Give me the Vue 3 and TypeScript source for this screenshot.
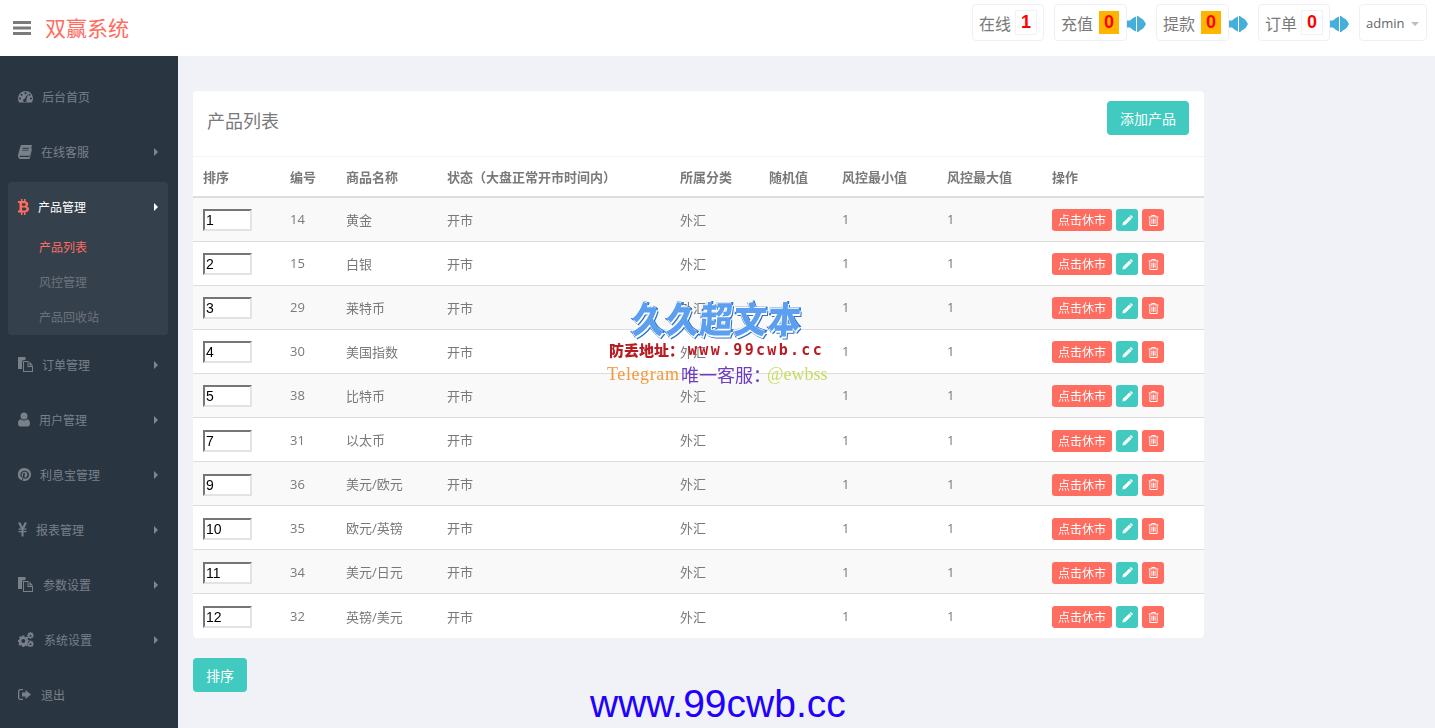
<script setup lang="ts">
interface NavItem { label: string; icon: string; w: number; gap: number; arrow: boolean }
const before: NavItem[] = [
  { label: '后台首页', icon: 'gauge', w: 15, gap: 9, arrow: false },
  { label: '在线客服', icon: 'book', w: 14, gap: 9, arrow: true },
]
const after: NavItem[] = [
  { label: '订单管理', icon: 'files', w: 15, gap: 9, arrow: true },
  { label: '用户管理', icon: 'user', w: 12, gap: 9, arrow: true },
  { label: '利息宝管理', icon: 'pin', w: 13, gap: 9, arrow: true },
  { label: '报表管理', icon: 'yen', w: 9, gap: 9, arrow: true },
  { label: '参数设置', icon: 'files', w: 15, gap: 10, arrow: true },
  { label: '系统设置', icon: 'cogs', w: 16, gap: 10, arrow: true },
  { label: '退出', icon: 'exit', w: 13, gap: 10, arrow: false },
]
const subs = ['产品列表', '风控管理', '产品回收站']
const rows = [
  [1, 14, '黄金'], [2, 15, '白银'], [3, 29, '莱特币'], [4, 30, '美国指数'], [5, 38, '比特币'],
  [7, 31, '以太币'], [9, 36, '美元/欧元'], [10, 35, '欧元/英镑'], [11, 34, '美元/日元'], [12, 32, '英镑/美元'],
] as const
const heads = ['排序', '编号', '商品名称', '状态（大盘正常开市时间内）', '所属分类', '随机值', '风控最小值', '风控最大值', '操作']
const colWidths = [87, 56, 101, 233, 89, 73, 105, 105, 162]
const counters = [
  { label: '充值', value: 0, warn: true },
  { label: '提款', value: 0, warn: true },
  { label: '订单', value: 0, warn: false },
]
</script>

<template>
  <div class="page">
    <header class="top">
      <svg class="bars" viewBox="0 0 18 14"><path d="M0 0h18v3H0zM0 5.500h18v3H0zM0 11h18v3H0z" /></svg>
      <span class="logo">双赢系统</span>
      <div class="top-right">
        <div class="chip online"><span>在线</span><b class="num">1</b></div>
        <template v-for="c in counters" :key="c.label">
          <div class="chip"><span>{{ c.label }}</span><b class="num" :class="{ warn: c.warn }">{{ c.value }}</b></div>
          <svg class="horn" viewBox="0 0 19 18">
            <path d="M0 5.500h3L6 3l3-1.500v15L6 15l-3-2.500H0z" />
            <path d="M10 1c1.200 0 2 .5 2.800 1.500l1.700 1c1.800 1 3 2.600 3.700 4.300l.8 1.200-.8 1.200c-.7 1.700-1.900 3.300-3.700 4.300l-1.700 1C12 16.500 11.200 17 10 17z" />
          </svg>
        </template>
        <div class="user">admin<i class="caret"></i></div>
      </div>
    </header>

    <div class="body">
      <aside class="side">
        <a v-for="n in before" :key="n.label" class="item">
          <svg class="ico" :style="{ width: n.w + 'px', marginRight: n.gap + 'px' }"><use :href="'#i-' + n.icon" width="100%" height="100%" /></svg>
          <span>{{ n.label }}</span><i v-if="n.arrow" class="arrow"></i>
        </a>
        <div class="group">
          <a class="item head">
            <svg class="ico btc" viewBox="0 0 11 16">
              <path fill-rule="evenodd" d="M3 0h1.500v2H6V0h1.500v2.200C9.300 2.600 10.300 3.600 10.300 5c0 1.100-.6 1.900-1.500 2.300 1.300.4 2.200 1.300 2.200 2.800 0 2-1.400 3-3.500 3.200V16H6v-2.600H4.500V16H3v-2.600H0v-1.800h1.500V3.900H0V2.100h3zM4 4.200v2.500h2c1 0 1.600-.4 1.600-1.250S7 4.200 6 4.200zM4 8.600v3h2.400c1.200 0 1.900-.5 1.900-1.500S7.600 8.600 6.400 8.600z" />
            </svg>
            <span>产品管理</span><i class="arrow"></i>
          </a>
          <a v-for="(s, i) in subs" :key="s" class="sub" :class="{ on: i === 0 }">{{ s }}</a>
        </div>
        <a v-for="n in after" :key="n.label" class="item">
          <svg class="ico" :style="{ width: n.w + 'px', marginRight: n.gap + 'px' }"><use :href="'#i-' + n.icon" width="100%" height="100%" /></svg>
          <span>{{ n.label }}</span><i v-if="n.arrow" class="arrow"></i>
        </a>
      </aside>

      <main class="main">
        <section class="panel">
          <div class="panel-head">
            <h2>产品列表</h2>
            <button class="btn">添加产品</button>
          </div>
          <table class="grid">
            <colgroup><col v-for="(w, i) in colWidths" :key="i" :style="{ width: w + 'px' }" /></colgroup>
            <thead><tr><th v-for="h in heads" :key="h">{{ h }}</th></tr></thead>
            <tbody>
              <tr v-for="r in rows" :key="r[1]">
                <td><input class="order" :value="r[0]" /></td>
                <td>{{ r[1] }}</td>
                <td>{{ r[2] }}</td>
                <td>开市</td>
                <td>外汇</td>
                <td></td>
                <td>1</td>
                <td>1</td>
                <td>
                  <div class="ops">
                    <button class="mini red text">点击休市</button>
                    <button class="mini teal">
                      <svg viewBox="0 0 12 12"><path d="M8 1.500 10.500 4 3.500 11 0.500 11.500 1 8.500zM9 .5c.4-.4 1-.4 1.400 0l1.100 1.100c.4.400.4 1 0 1.400l-.5.500L8.500 1z" /></svg>
                    </button>
                    <button class="mini red">
                      <svg viewBox="0 0 12 12"><path fill-rule="evenodd" d="M4 0h4l.7 1.500H11.500v1h-1v8.500c0 .6-.4 1-1 1h-7c-.6 0-1-.4-1-1V2.500h-1v-1h2.800zM4.600 1 4.300 1.500h3.400L7.400 1zM2.500 2.500V11h7V2.500zM3.800 4h1v5.500h-1zM5.500 4h1v5.500h-1zM7.200 4h1v5.500h-1z" /></svg>
                    </button>
                  </div>
                </td>
              </tr>
            </tbody>
          </table>
        </section>
        <button class="btn sort">排序</button>
      </main>
    </div>

    <div class="mark">
      <div class="mark-title">久久超文本</div>
      <div class="mark-line"><b class="mark-cn">防丢地址：</b><span class="mark-url">www.99cwb.cc</span></div>
      <div class="mark-tg"><span class="tg">Telegram</span><span class="kf">唯一客服：</span><span class="at">@ewbss</span></div>
    </div>
    <div class="bottom-url">www.99cwb.cc</div>

    <svg class="defs" width="0" height="0">
      <defs>
        <symbol id="i-gauge" viewBox="0 0 16 14">
          <path fill-rule="evenodd" d="M8 1a8 8 0 0 1 8 8c0 1.700-.5 3.200-1.300 4.500H1.300A8 8 0 0 1 0 9a8 8 0 0 1 8-8zM8 2.300a1.100 1.100 0 1 0 0 2.200 1.100 1.100 0 0 0 0-2.200zM3.800 4a1.100 1.100 0 1 0 0 2.200 1.100 1.100 0 0 0 0-2.200zM12.200 4a1.100 1.100 0 1 0 0 2.200 1.100 1.100 0 0 0 0-2.200zM2.200 8a1.100 1.100 0 1 0 0 2.200 1.100 1.100 0 0 0 0-2.200zM13.800 8a1.100 1.100 0 1 0 0 2.200 1.100 1.100 0 0 0 0-2.200zM9.800 5 7.200 9.300a1.800 1.800 0 1 0 1.700 1L10.500 5.300z" />
        </symbol>
        <symbol id="i-book" viewBox="0 0 15 14">
          <path fill-rule="evenodd" d="M3.500 0H15l-2.500 10.500c-.2.700-.6 1-1.300 1H2.500c-.7 0-1 .3-1 .7s.3.7 1 .7h9.500l2.200-9 .8.600-2.300 9.500c-.2.600-.6 1-1.300 1H2C.7 14 0 13 0 11.500.1 10.500 2.500 1.500 3 .7zM5 3l-.2 1h6.700l.3-1zM4.500 5l-.2 1H11l.3-1z" />
        </symbol>
        <symbol id="i-files" viewBox="0 0 15 15">
          <path fill-rule="evenodd" d="M0 0h7.500v3H6a2 2 0 0 0-2 2v7H0zM5 4h5.500v5H15v6H5zM6 5v9h8v-4H9.500V5zM11.500 4.500 15 8.500h-3.500z" />
        </symbol>
        <symbol id="i-user" viewBox="0 0 12 14">
          <path d="M6 0a3.500 3.500 0 1 1 0 7 3.500 3.500 0 0 1 0-7zM2.800 6.800C3.700 7.600 4.800 8 6 8s2.300-.4 3.200-1.200C11 7 12 8.500 12 11c0 1.800-1 3-2.600 3H2.600C1 14 0 12.800 0 11c0-2.500 1-4 2.800-4.200z" />
        </symbol>
        <symbol id="i-pin" viewBox="0 0 13 13">
          <path fill-rule="evenodd" d="M6.500 0a6.500 6.500 0 1 1-1.900 12.700c.2-.4.500-1 .6-1.500l.4-1.400c.3.500 1 .9 1.800.9 2.200 0 3.700-1.900 3.700-4.200C10.900 4.200 9 2.700 6.800 2.700 4 2.700 2.300 4.600 2.300 6.700c0 1 .5 2.200 1.400 2.600.2.100.3 0 .3-.1l.2-.7c0-.1 0-.2-.1-.3-.3-.4-.5-.9-.5-1.400 0-1.600 1.200-3 3.100-3 1.700 0 2.700 1 2.700 2.400 0 1.800-.8 3.300-2 3.300-.7 0-1.200-.5-1-1.300.2-.8.6-1.700.6-2.300 0-.5-.3-1-.9-1-.7 0-1.200.8-1.200 1.700 0 .6.200 1 .2 1l-.9 3.600c-.1.400-.1.900-.1 1.400A6.500 6.500 0 0 1 6.500 0z" />
        </symbol>
        <symbol id="i-yen" viewBox="0 0 9 14">
          <path d="M0 0h2.500L4.500 4.500 6.500 0H9L6.200 6H8.500v1.300H5.500V8.500h3v1.300h-3V14h-2V9.800h-3V8.500h3V7.300h-3V6h2.300z" />
        </symbol>
        <symbol id="i-cogs" viewBox="0 0 16 15">
          <path fill-rule="evenodd" d="M4.300 3.500h2l.3 1.400 1 .4L8.900 4.500l1.400 1.400-.8 1.200.4 1 1.400.3v2l-1.400.3-.4 1 .8 1.200-1.400 1.400-1.300-.8-1 .4-.3 1.300h-2L4 13.400l-1-.4-1.200.8L.4 12.400l.8-1.200-.4-1L0 9.900v-2l1.400-.3.400-1L1 5.400 2.400 4l1.200.8.500-.2zM5.300 7a2 2 0 1 0 0 4 2 2 0 0 0 0-4zM13 0l.5 1 1-.3.700.7-.4 1 1 .5v1l-1 .5.400 1-.7.700-1-.3-.5 1h-1l-.5-1-1 .3-.7-.7.400-1-1-.5v-1l1-.5-.4-1 .7-.7 1 .3.500-1zM12.500 2.800a1 1 0 1 0 0 2 1 1 0 0 0 0-2zM13 8.500l.5 1 1-.3.700.7-.4 1 1 .5v1l-1 .5.400 1-.7.700-1-.3-.5 1h-1l-.5-1-1 .3-.7-.7.400-1-1-.5v-1l1-.5-.4-1 .7-.7 1 .3.500-1zM12.500 11.300a1 1 0 1 0 0 2 1 1 0 0 0 0-2z" />
        </symbol>
        <symbol id="i-exit" viewBox="0 0 13 11">
          <path d="M0 2.500C0 1 1 0 2.500 0H5v1.300H2.500c-.7 0-1.200.5-1.200 1.200v6c0 .7.500 1.200 1.200 1.200H5V11H2.500C1 11 0 10 0 8.500zM7.500 1 13 5.500l-5.500 4.500V7.500H4v-4h3.500z" />
        </symbol>
      </defs>
    </svg>
  </div>
</template>

<style>
html, body { margin: 0; padding: 0; }
</style>

<style scoped>
.page {
  position: relative;
  height: 728px;
  width: 1435px;
  overflow: hidden;
  background: #f1f2f7;
  font-family: "Open Sans", "Noto Sans CJK SC", sans-serif;
  color: #797979;
}
.top {
  display: flex;
  align-items: center;
  height: 56px;
  background: #fff;
  padding: 0 8px 0 13px;
  box-sizing: border-box;
}
.bars { width: 18px; height: 14px; fill: #7b7b7b; margin-right: 14px; }
.logo { font-size: 21px; color: #ff6c60; margin-top: -2px; }
.top-right { display: flex; align-items: flex-start; margin-left: auto; height: 56px; padding-top: 4px; box-sizing: border-box; }
.chip {
  display: flex; align-items: center; gap: 4px;
  height: 37px; box-sizing: border-box;
  border: 1px solid #eff0f6; border-radius: 4px;
  padding: 0 6px;
  font-size: 16px; color: #797979;
  margin-left: 10px;
}
.chip.online { margin-left: 0; }
.num {
  display: block; width: 22px; height: 25px; line-height: 23px; box-sizing: border-box;
  border: 1px solid #f1f2f7; background: #fff; color: #ff0000;
  text-align: center; font-size: 18px; font-family: "Liberation Sans", sans-serif; font-weight: 700;
}
.num.warn { background: #ffb400; border-color: #fff; margin-left: 1px; }
.horn { width: 19px; height: 18px; fill: #45aed9; margin-top: 11px; flex: none; }
.user {
  display: flex; align-items: center;
  height: 37px; width: 68px; box-sizing: border-box;
  border: 1px solid #eff0f6; border-radius: 4px;
  padding: 1px 0 0 6px; margin-left: 10px;
  font-size: 13px; color: #666;
}
.caret { margin-left: 7px; margin-top: 2px; border: 4px solid transparent; border-top-color: #b8bcc6; border-bottom: 0; }

.body { display: flex; height: 672px; }
.side {
  width: 178px; flex: none; background: #2a3542; box-sizing: border-box; padding-top: 13px;
  font-size: 12px; color: #78808a;
}
.item {
  display: flex; align-items: center; position: relative;
  height: 55px; padding-left: 18px; box-sizing: border-box;
}
.ico { height: 15px; width: 15px; fill: #78808a; flex: none; }
.arrow {
  position: absolute; left: 154px; top: 50%; margin-top: -4px;
  border: 4px solid transparent; border-left-color: #808790; border-right: 0;
}
.group {
  background: #35404d; border-radius: 4px;
  margin: 3px 10px 2px 8px;
  height: 153px;
}
.item.head { height: 47px; padding: 2px 0 0 10px; color: #fff; }
.head .ico { width: 11px; height: 16px; fill: #ff6c60; margin-right: 9px; }
.head .arrow { left: 146px; border-left-color: #fff; margin-top: -3px; }
.sub { display: flex; align-items: center; height: 35px; padding-left: 31px; color: #6c737c; }
.sub.on { color: #ff6c60; }

.main { flex: 1; padding: 35px 0 0 15px; box-sizing: border-box; }
.panel { width: 1011px; background: #fff; border-radius: 4px; height: 547px; overflow: hidden; }
.panel-head {
  display: flex; align-items: flex-start; justify-content: space-between;
  height: 66px; box-sizing: border-box;
  padding: 10px 15px 0 14px;
  border-bottom: 1px solid #f2f3f8;
}
.panel-head h2 { margin: 0; font-size: 18px; line-height: 40px; font-weight: 400; color: #797979; }
.btn {
  border: 0; background: #41cac0; color: #fff; font: inherit; font-size: 14px;
  height: 34px; width: 82px; border-radius: 4px; padding: 0;
}
.sort { width: 54px; margin-top: 20px; display: block; }

.grid { width: 1011px; table-layout: fixed; border-collapse: collapse; font-size: 13px; will-change: transform; }
.grid th {
  height: 40px; padding: 0 10px; text-align: left; font-weight: 700; color: #797979;
  border-bottom: 2px solid #ddd; white-space: nowrap; box-sizing: border-box;
}
.grid td { height: 44.1px; padding: 0 10px; box-sizing: border-box; border-top: 1px solid #ddd; white-space: nowrap; }
.grid thead + tbody tr:first-child td { border-top: 0; }
.grid tbody tr:nth-child(odd) { background: #f9f9f9; }
.order {
  display: block; width: 49px; height: 22px; box-sizing: border-box;
  border: 2px solid; border-color: #767676 #e3e3e3 #e3e3e3 #767676; padding: 0 1px; margin: 2px 0 0;
  font: 14px "Liberation Sans", sans-serif; color: #000; background: #fff;
}
.ops { display: flex; gap: 4px; margin-top: 2px; }
.mini {
  display: flex; align-items: center; justify-content: center;
  width: 22px; height: 22px; border: 0; padding: 0; border-radius: 3px; color: #fff; font: inherit; font-size: 12px;
}
.mini svg { width: 11px; height: 11px; fill: #fff; }
.mini.text { width: 60px; }
.red { background: #ff6c60; }
.teal { background: #41cac0; }

.mark { position: absolute; left: 600px; top: 298px; width: 240px; pointer-events: none; }
.mark-title {
  position: absolute; left: 32px; top: 0; white-space: nowrap;
  font: 900 33px/40px "Noto Sans CJK SC", sans-serif; letter-spacing: 1px;
  color: #5c9ff0; transform: skewX(-4deg) scaleY(1.1);
  -webkit-text-stroke: 2px #2a70cc;
  paint-order: stroke fill;
  text-shadow: -1px -1px 0 #fff, 1px 1px 0 #fff, 2px 2px 0 #2a70cc;
}
.mark-line { position: absolute; left: 9px; top: 42px; display: flex; white-space: nowrap; font: 700 15px/20px "Noto Sans CJK SC", sans-serif; color: #b81c22; }
.mark-cn { width: 79px; flex: none; }
.mark-url { font: 700 15px/20px "DejaVu Sans Mono", monospace; letter-spacing: 2.3px; }
.mark-tg { position: absolute; left: 7px; top: 65px; display: flex; align-items: center; white-space: nowrap; font: 400 18px/22px "Liberation Serif", serif; }
.tg { color: #f59a3c; width: 74px; letter-spacing: .6px; flex: none; }
.kf { color: #6f3cc4; font: 400 18px/22px "Noto Sans CJK SC", sans-serif; width: 86px; flex: none; }
.at { color: #c9dc62; font-size: 18px; }
.bottom-url {
  position: absolute; left: 590px; top: 681px; font: 400 39px/46px "Liberation Sans", sans-serif; color: #2200ff;
}
.defs { position: absolute; }
</style>
